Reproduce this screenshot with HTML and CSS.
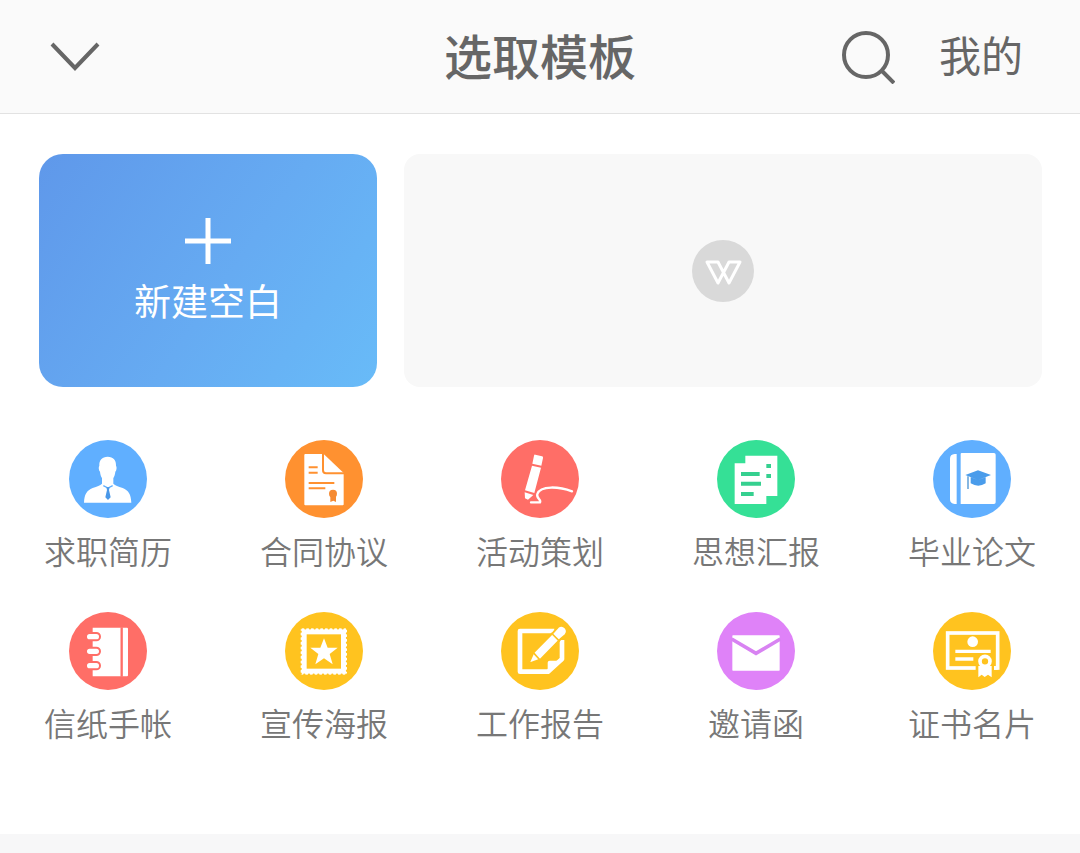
FILE: index.html
```html
<!DOCTYPE html>
<html lang="zh-CN">
<head>
    <meta charset="UTF-8">
    <meta name="viewport" content="width=device-width, initial-scale=1.0">
    <title>选取模板</title>
    <link rel="stylesheet" href="styles.css">
</head>
<body>
    <header>
        <button class="close" type="button" aria-label="关闭">
            <svg width="50" height="30" viewBox="0 0 50 30"><path d="M2 2L25 26L48 2" fill="none" stroke="#666" stroke-width="4"/></svg>
        </button>
        <h1>选取模板</h1>
        <nav>
            <button class="search" type="button" aria-label="搜索">
                <svg width="54" height="54" viewBox="0 0 54 54"><g fill="none" stroke="#666" stroke-width="4"><circle cx="25" cy="25" r="22"/><path d="M40 40L53 53"/></g></svg>
            </button>
            <a class="mine" href="#">我的</a>
        </nav>
    </header>
    <main>
        <section class="cards">
            <button class="new-blank" type="button">
                <svg width="46" height="46" viewBox="0 0 46 46"><path d="M23 0V46M0 23H46" stroke="#fff" stroke-width="5"/></svg>
                <span>新建空白</span>
            </button>
            <div class="banner">
                <svg width="62" height="62" viewBox="0 0 62 62">
                    <circle cx="31" cy="31" r="31" fill="#d9d9d9"/>
                    <path d="M15 22H26L37 43L48 22H37L26 43Z" fill="none" stroke="#fff" stroke-width="3" stroke-linejoin="round"/>
                </svg>
            </div>
        </section>
        <ul class="categories">
            <li><a href="#">
                <svg class="icon" viewBox="0 0 234 234">
                    <circle cx="117" cy="117" r="117" fill="#60afff"/>
                    <path d="M116 50c17 0 26 11 25 27 3 3 2 14-2 18-1 9-3 15-6 19v17c6 6 14 8 28 13 18 7 25 20 26 44H45c1-24 8-37 26-44 14-5 22-7 28-13v-17c-3-4-5-10-6-19-4-4-5-15-2-18-1-16 8-27 25-27z" fill="#fff"/>
                    <path d="M103 137l14 7 14-7" fill="none" stroke="#60afff" stroke-width="4"/>
                    <path d="M112 142h10l-2 8 5 22-8 8-8-8 5-22z" fill="#4a98e8"/>
                </svg>
                <span>求职简历</span>
            </a></li>
            <li><a href="#">
                <svg class="icon" viewBox="0 0 234 234">
                    <circle cx="117" cy="117" r="117" fill="#ff9130"/>
                    <path d="M61 42h55l60 57v94q0 3-3 3H61q-3 0-3-3V45q0-3 3-3z" fill="#fff"/>
                    <path d="M114 40v51q0 9 9 9h55M71 82h27M71 98h27M71 129h77M71 145h50" fill="none" stroke="#ff9130" stroke-width="6"/>
                    <circle cx="144" cy="161" r="12" fill="#f58a32"/>
                    <path d="M136 166h17v20l-8-4-9 4z" fill="#f58a32"/>
                </svg>
                <span>合同协议</span>
            </a></li>
            <li><a href="#">
                <svg class="icon" viewBox="0 0 234 234">
                    <circle cx="117" cy="117" r="117" fill="#ff6e67"/>
                    <path d="M103 44l20 5q4 1 3 5l-5 23-27-6 5-24q1-4 4-3zM93 77l27 6-20 76-28-8zM71 157l26 8-16 14-9-4z" fill="#fff"/>
                    <path d="M90 187h27c5-8-12-12-8-25 9-27 67-22 104-8" fill="none" stroke="#fff" stroke-width="7" stroke-linecap="round"/>
                </svg>
                <span>活动策划</span>
            </a></li>
            <li><a href="#">
                <svg class="icon" viewBox="0 0 234 234">
                    <circle cx="117" cy="117" r="117" fill="#35e096"/>
                    <path d="M85 47h96v121h-33v24H53V70h32z" fill="#fff"/>
                    <path d="M72 102h56M72 131h60M72 162h38M148 78h14M148 108h14" fill="none" stroke="#35d08f" stroke-width="12"/>
                </svg>
                <span>思想汇报</span>
            </a></li>
            <li><a href="#">
                <svg class="icon" viewBox="0 0 234 234">
                    <circle cx="117" cy="117" r="117" fill="#60afff"/>
                    <path d="M71 42v150h-6q-14-1-14-14V56q0-13 14-14zM86 39h97q5 0 5 5v143q0 5-5 5H83V42q0-3 3-3z" fill="#fff"/>
                    <path d="M135 91l39 14-39 15-38-15zM113 112l22 8 23-8v18q-22 14-45 0z" fill="#4a9ceb"/>
                    <path d="M105 109v38" stroke="#6fa9dc" stroke-width="5"/>
                </svg>
                <span>毕业论文</span>
            </a></li>
            <li><a href="#">
                <svg class="icon" viewBox="0 0 234 234">
                    <circle cx="117" cy="117" r="117" fill="#ff6e67"/>
                    <path d="M71 47h103q3 0 3 3v140q0 3-3 3H71z" fill="#fff"/>
                    <path d="M158 46v148" stroke="#ff6e67" stroke-width="7"/>
                    <g fill="#fff" stroke="#ff6e67" stroke-width="6">
                        <rect x="51" y="63" width="42" height="22" rx="11"/>
                        <rect x="51" y="107" width="42" height="22" rx="11"/>
                        <rect x="51" y="150" width="42" height="22" rx="11"/>
                    </g>
                </svg>
                <span>信纸手帐</span>
            </a></li>
            <li><a href="#">
                <svg class="icon" viewBox="0 0 234 234">
                    <circle cx="117" cy="117" r="117" fill="#ffc31f"/>
                    <rect x="56" y="58" width="121" height="121" fill="none" stroke="#fff" stroke-width="18"/>
                    <rect x="47" y="49" width="139" height="139" fill="none" stroke="#ffc31f" stroke-width="7" stroke-linecap="round" stroke-dasharray="0 14"/>
                    <path d="M117 79l11 28h30l-24 19 9 31-26-18-26 18 9-31-24-19h30z" fill="#fff"/>
                </svg>
                <span>宣传海报</span>
            </a></li>
            <li><a href="#">
                <svg class="icon" viewBox="0 0 234 234">
                    <circle cx="117" cy="117" r="117" fill="#ffc31f"/>
                    <path d="M160 57H57v122h84l42-38V84" fill="none" stroke="#fff" stroke-width="14" stroke-linejoin="round"/>
                    <path d="M140 182v-30q0-6 6-6h40z" fill="#fff"/>
                    <path d="M82 156l15-34 60-61 14-16q12-8 22 2 9 10 1 21l-15 13-60 61z" fill="#fff" stroke="#ffc31f" stroke-width="6"/>
                    <path d="M151 63l25 25M97 122l20 22" stroke="#ffc31f" stroke-width="5"/>
                </svg>
                <span>工作报告</span>
            </a></li>
            <li><a href="#">
                <svg class="icon" viewBox="0 0 234 234">
                    <circle cx="117" cy="117" r="117" fill="#df82f8"/>
                    <rect x="46" y="70" width="142" height="106" rx="2" fill="#fff"/>
                    <path d="M44 81l73 43 73-43" fill="none" stroke="#d883f2" stroke-width="11"/>
                </svg>
                <span>邀请函</span>
            </a></li>
            <li><a href="#">
                <svg class="icon" viewBox="0 0 234 234">
                    <circle cx="117" cy="117" r="117" fill="#ffc31f"/>
                    <rect x="44" y="63" width="150" height="105" fill="none" stroke="#fff" stroke-width="11"/>
                    <circle cx="119" cy="89" r="16" fill="#fff"/>
                    <path d="M67 118h106M67 141h54" stroke="#fff" stroke-width="10"/>
                    <path d="M128 128h55v75h-55z" fill="#ffc31f"/>
                    <path d="M183 168h11" stroke="#fff" stroke-width="11"/>
                    <path d="M136 162h40v34l-11-8-10 7-9-7-10 8z" fill="#fff"/>
                    <circle cx="156" cy="148" r="15" fill="#ffc31f" stroke="#fff" stroke-width="11"/>
                </svg>
                <span>证书名片</span>
            </a></li>
        </ul>
    </main>
</body>
</html>
```
FILE: styles.css
```css
* {
    box-sizing: border-box;
}

body {
    margin: 0;
    background-color: #f7f7f8;
    color: #666;
    font-family: "Noto Sans CJK SC", sans-serif;
}

button {
    padding: 0;
    border: none;
    background: none;
    font-family: inherit;
    cursor: pointer;
}

a {
    color: inherit;
    text-decoration: none;
}

svg {
    display: block;
}

header {
    display: grid;
    grid-template-columns: 1fr auto 1fr;
    align-items: center;
    height: 114px;
    padding: 0 50px;
    background-color: #fafafa;
    border-bottom: 1px solid #e2e2e2;
}

.close {
    justify-self: start;
}

h1,
.mine {
    margin: 0;
    padding-bottom: 6px;
    line-height: 64px;
}

h1 {
    font-size: 48px;
    font-weight: 500;
}

nav {
    display: flex;
    justify-content: flex-end;
    align-items: center;
    gap: 44px;
    padding-right: 7px;
}

.mine {
    font-size: 42px;
}

main {
    padding: 40px 0 88px;
    background-color: #fff;
}

.cards {
    display: flex;
    gap: 27px;
    padding: 0 38px 0 39px;
}

.new-blank,
.banner {
    display: flex;
    flex-direction: column;
    align-items: center;
    justify-content: center;
    height: 233px;
}

.new-blank {
    flex: 338;
    gap: 12px;
    border-radius: 24px;
    background: linear-gradient(125deg, #5f98ea, #66abf2 55%, #68bbf8);
    color: #fff;
    font-size: 37px;
    line-height: 48px;
}

.banner {
    flex: 638;
    border-radius: 16px;
    background-color: #f8f8f8;
}

.categories {
    display: grid;
    grid-template-columns: repeat(5, 1fr);
    row-gap: 38px;
    margin: 0;
    padding: 53px 0 0;
    list-style: none;
}

.categories a {
    display: flex;
    flex-direction: column;
    align-items: center;
    gap: 8px;
    color: #777;
    font-size: 32px;
    font-weight: 350;
    line-height: 48px;
}

.icon {
    width: 78px;
    height: 78px;
}
```
